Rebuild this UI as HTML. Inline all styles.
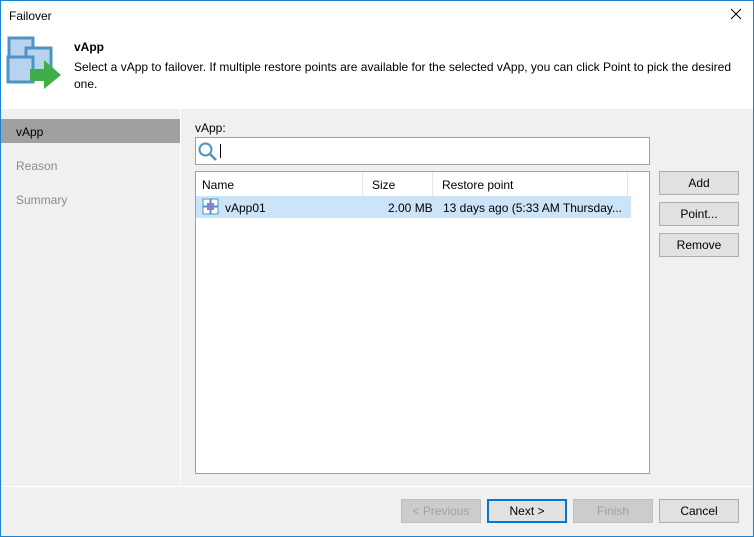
<!DOCTYPE html>
<html><head><meta charset="utf-8"><style>
*{box-sizing:border-box;margin:0;padding:0}
body{width:754px;height:537px;overflow:hidden;font-family:"Liberation Sans",sans-serif;font-size:12px;color:#000;background:#f0f0f0;position:relative}
.a{position:absolute}
.btn{position:absolute;background:#e1e1e1;border:1px solid #adadad;text-align:center;line-height:22px;height:24px}
.dis{color:#a0a0a0;background:#cccccc;border-color:#bfbfbf}
</style></head><body>
<div class="a" style="left:0;top:0;width:754px;height:537px;border:1px solid #1883d7;z-index:10;pointer-events:none"></div>
<div class="a" style="left:0;top:0;width:754px;height:109px;background:#fff"></div>
<div class="a" style="left:9px;top:9px;font-size:12px">Failover</div>
<svg class="a" style="left:728px;top:6px" width="16" height="16"><path d="M3 3L13 13M13 3L3 13" stroke="#000" stroke-width="1"/></svg>
<svg class="a" style="left:6px;top:36px" width="56" height="54">
<rect x="3" y="2" width="24" height="24" fill="#b8d3ee" stroke="#4d94c6" stroke-width="3"/>
<rect x="20" y="12" width="25" height="25" fill="#b8d3ee" stroke="#4d94c6" stroke-width="3"/>
<rect x="2" y="21" width="25" height="25" fill="#b8d3ee" stroke="#4d94c6" stroke-width="3"/>
<path d="M24 33H38V24L55 39L38 53V45H24Z" fill="#3fae49"/>
</svg>
<div class="a" style="left:74px;top:40px;font-weight:bold;font-size:12px">vApp</div>
<div class="a" style="left:74px;top:59px;width:670px;line-height:17px">Select a vApp to failover. If multiple restore points are available for the selected vApp, you can click Point to pick the desired one.</div>
<div class="a" style="left:180px;top:109px;width:1px;height:377px;background:#fff"></div>
<div class="a" style="left:1px;top:119px;width:179px;height:24px;background:#a0a0a0"></div>
<div class="a" style="left:16px;top:125px">vApp</div>
<div class="a" style="left:16px;top:159px;color:#8a8a8a">Reason</div>
<div class="a" style="left:16px;top:193px;color:#8a8a8a">Summary</div>
<div class="a" style="left:195px;top:121px">vApp:</div>
<div class="a" style="left:195px;top:137px;width:455px;height:28px;background:#fff;border:1px solid #a0a0a0"></div>
<svg class="a" style="left:197px;top:141px" width="22" height="22"><circle cx="8.5" cy="8.5" r="6" fill="none" stroke="#4d94c6" stroke-width="2"/><path d="M13 13L19 19" stroke="#4d94c6" stroke-width="2.5"/></svg>
<div class="a" style="left:220px;top:144px;width:1px;height:14px;background:#000"></div>
<div class="a" style="left:195px;top:171px;width:455px;height:303px;background:#fff;border:1px solid #a0a0a0"></div>
<div class="a" style="left:362px;top:172px;width:1px;height:24px;background:#e5e5e5"></div>
<div class="a" style="left:432px;top:172px;width:1px;height:24px;background:#e5e5e5"></div>
<div class="a" style="left:627px;top:172px;width:1px;height:24px;background:#e5e5e5"></div>
<div class="a" style="left:202px;top:178px">Name</div>
<div class="a" style="left:372px;top:178px">Size</div>
<div class="a" style="left:442px;top:178px">Restore point</div>
<div class="a" style="left:196px;top:196px;width:435px;height:22px;background:#cce4f7"></div>
<svg class="a" style="left:202px;top:198px" width="17" height="17"><rect x="1" y="1" width="15" height="15" fill="#fff" stroke="#4d94c6"/><path d="M8.5 1V16M1 8.5H16" stroke="#4d94c6" stroke-width="2"/><rect x="5" y="5" width="7" height="7" fill="#8c7fdc"/></svg>
<div class="a" style="left:225px;top:201px">vApp01</div>
<div class="a" style="left:388px;top:201px">2.00 MB</div>
<div class="a" style="left:443px;top:201px">13 days ago (5:33 AM Thursday...</div>
<div class="btn" style="left:659px;top:171px;width:80px">Add</div>
<div class="btn" style="left:659px;top:202px;width:80px">Point...</div>
<div class="btn" style="left:659px;top:233px;width:80px">Remove</div>
<div class="a" style="left:1px;top:486px;width:752px;height:1px;background:#fff"></div>
<div class="btn dis" style="left:401px;top:499px;width:80px">&lt; Previous</div>
<div class="btn" style="left:487px;top:499px;width:80px;border:2px solid #0078d7;line-height:20px">Next &gt;</div>
<div class="btn dis" style="left:573px;top:499px;width:80px">Finish</div>
<div class="btn" style="left:659px;top:499px;width:80px">Cancel</div>
</body></html>
